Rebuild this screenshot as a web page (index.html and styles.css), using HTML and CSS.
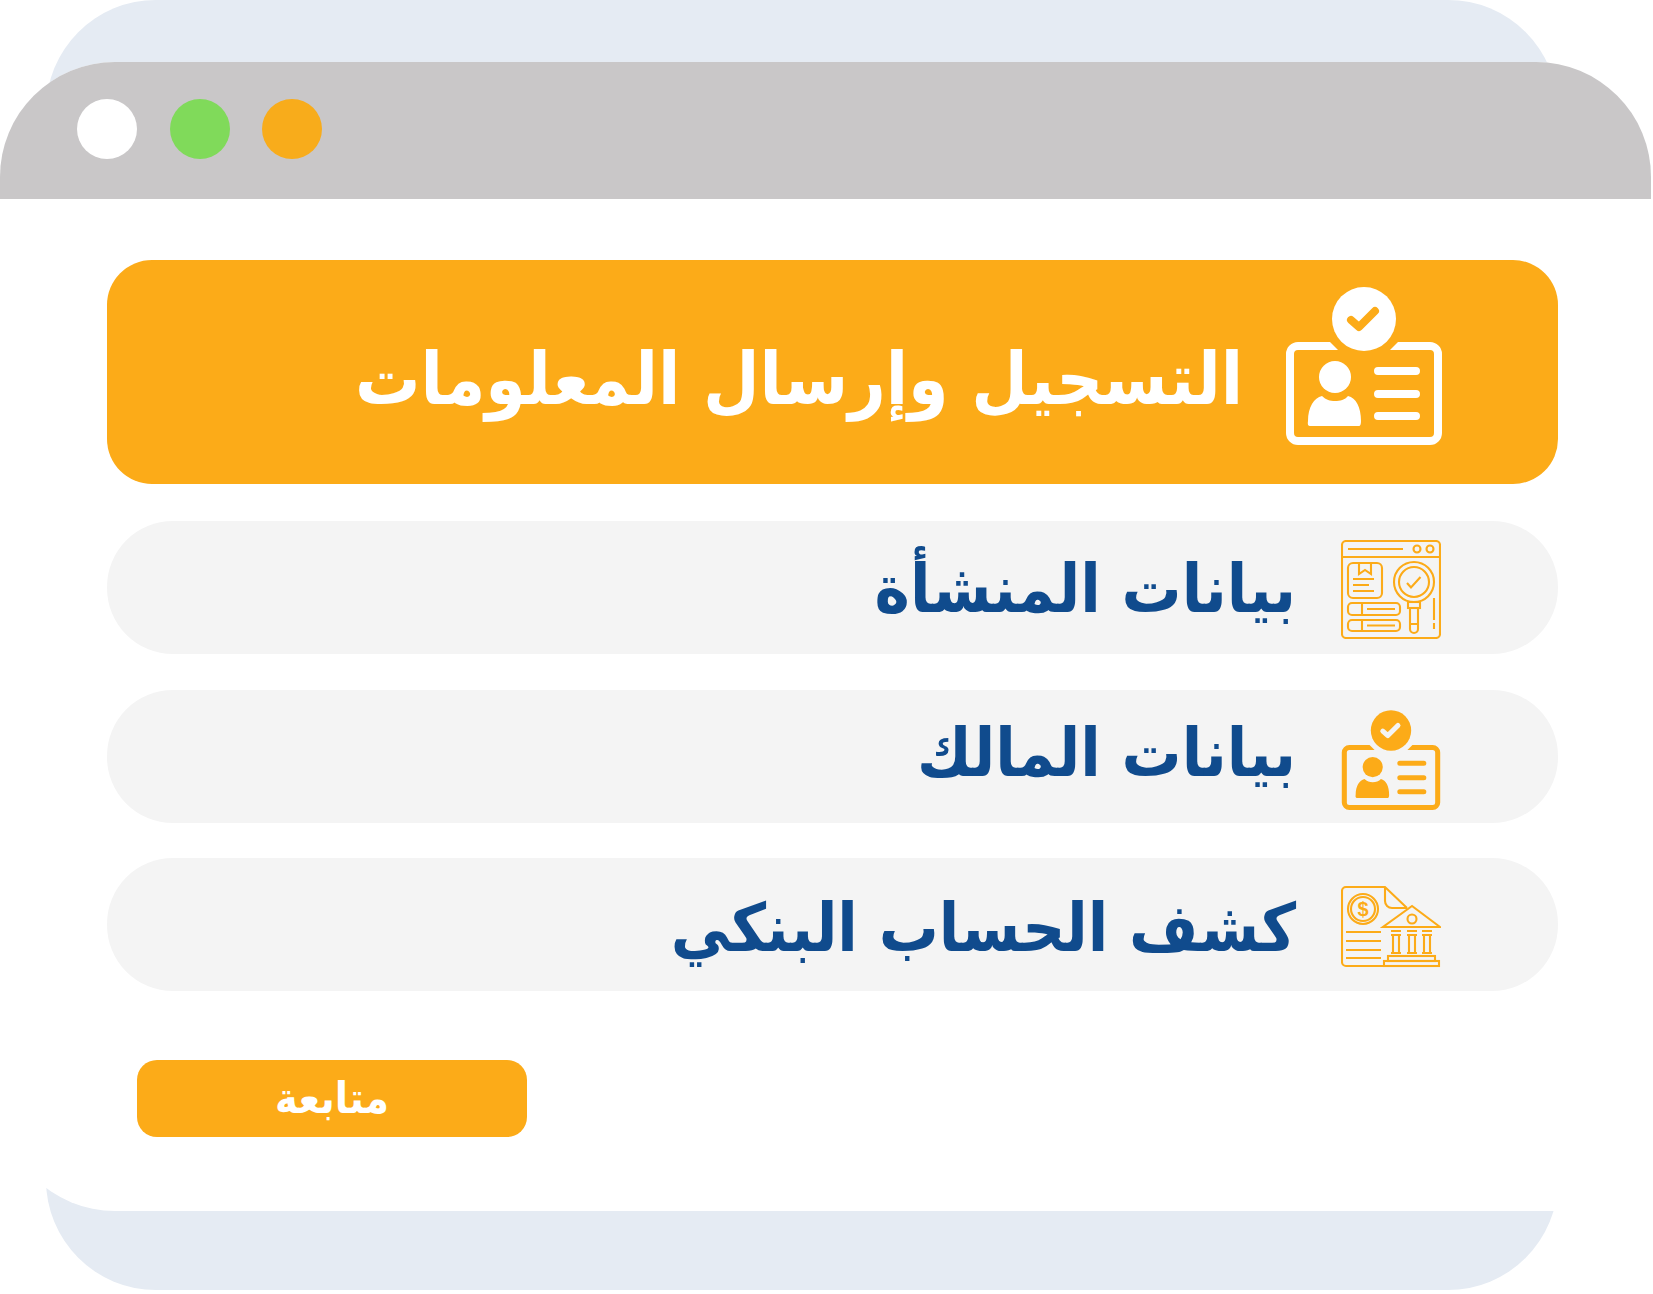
FILE: index.html
```html
<!DOCTYPE html>
<html lang="ar" dir="rtl">
<head>
    <meta charset="UTF-8">
    <title>التسجيل وإرسال المعلومات</title>
    <link rel="stylesheet" href="styles.css">
</head>
<body>
    <svg class="defs" width="0" height="0">
        <symbol id="id-check" viewBox="26 7 156 168">
            <path fill="currentColor" d="M70 72H38a12 12 0 0 0-12 12V163a12 12 0 0 0 12 12H170a12 12 0 0 0 12-12V84a12 12 0 0 0-12-12H138L130 80H170a4 4 0 0 1 4 4V163a4 4 0 0 1-4 4H38a4 4 0 0 1-4-4V84a4 4 0 0 1 4-4H78Z"/>
            <circle fill="currentColor" cx="104" cy="49" r="32"/>
            <path class="tick" d="M91 50L99 57L115 41"/>
            <circle fill="currentColor" cx="75" cy="107" r="16"/>
            <path fill="currentColor" d="M50 156Q47 156 48 151C48 137 54 128 62 126C66 130 70 131 75 131C80 131 85 130 88 126C96 128 101 137 101 151Q101 156 99 156Z"/>
            <path class="bars" d="M118 101H156M118 124H156M118 146H156"/>
        </symbol>
    </svg>

    <div class="stage">
        <div class="back-panel"></div>
        <div class="window">
            <div class="titlebar">
                <span class="dot dot-white"></span>
                <span class="dot dot-green"></span>
                <span class="dot dot-orange"></span>
            </div>
            <div class="content">
                <div class="step step-active">
                    <svg class="icon-big"><use href="#id-check"/></svg>
                    <span class="step-title">التسجيل وإرسال المعلومات</span>
                </div>
                <div class="step">
                    <svg class="icon line-icon" viewBox="21 10 100 99">
                        <rect x="22" y="11" width="98" height="97" rx="4"/>
                        <path d="M22 27H120M28 19H83"/>
                        <circle cx="97" cy="19" r="3.5"/>
                        <circle cx="110" cy="19" r="3.5"/>
                        <rect x="28" y="33" width="34" height="35" rx="5"/>
                        <path d="M39 34V44L45 40L51 44V34M33 49H54M33 55H49M33 61H54"/>
                        <rect x="28" y="73" width="52" height="12" rx="4"/>
                        <path d="M42 73V85M47 79H75"/>
                        <rect x="28" y="90" width="52" height="11" rx="4"/>
                        <path d="M42 90V101M47 95.500H75"/>
                        <circle cx="94" cy="52" r="20"/>
                        <circle cx="94" cy="52" r="15"/>
                        <path d="M87 53L91 57.500L100.500 47"/>
                        <rect x="88" y="72" width="12" height="6"/>
                        <path d="M90 78V99a4 4 0 0 0 8 0V78M90 94H98M114 68V90M114 93V99"/>
                    </svg>
                    <span class="step-title title-low">بيانات المنشأة</span>
                </div>
                <div class="step">
                    <svg class="icon icon-id"><use href="#id-check"/></svg>
                    <span class="step-title title-raised">بيانات المالك</span>
                </div>
                <div class="step step-last">
                    <svg class="icon line-icon" viewBox="21 11 100 81">
                        <path d="M87 33L65 12H26a4 4 0 0 0-4 4V87a4 4 0 0 0 4 4H63M65 13V26a7 7 0 0 0 7 7H87"/>
                        <circle cx="43" cy="34" r="15"/>
                        <circle cx="43" cy="34" r="12"/>
                        <text class="dollar" x="43" y="41">$</text>
                        <path d="M26 57H61M26 66H61M26 75H61M26 83H61"/>
                        <path d="M92 31L63 52H120Z"/>
                        <circle cx="92" cy="44" r="4.500"/>
                        <path d="M71 56H81M87 56H97M102 56H112M71 60H81M87 60H97M102 60H112"/>
                        <path d="M73 60V78M79 60V78M89 60V78M95 60V78M104 60V78M110 60V78"/>
                        <path d="M71 78H81M87 78H97M102 78H112"/>
                        <rect x="68" y="81" width="47" height="5"/>
                        <rect x="64" y="86" width="55" height="5"/>
                    </svg>
                    <span class="step-title title-lower">كشف الحساب البنكي</span>
                </div>
                <button class="next-btn" type="button">متابعة</button>
            </div>
        </div>
    </div>
</body>
</html>
```

FILE: styles.css
```css
html, body {
    margin: 0;
    padding: 0;
    background: #ffffff;
}
body {
    font-family: "DejaVu Sans", sans-serif;
    overflow: hidden;
}
.defs {
    display: block;
}
.stage {
    display: grid;
    width: 1653px;
    height: 1294px;
}
.back-panel, .window {
    grid-area: 1 / 1;
}
.back-panel {
    margin: 0 95px 4px 46px;
    background: #e5ebf3;
    border-radius: 110px;
}
.window {
    margin: 62px 2px 83px 0;
    background: #ffffff;
    border-radius: 115px 115px 0 115px;
}
.titlebar {
    display: flex;
    direction: ltr;
    gap: 32.500px;
    align-items: center;
    height: 134px;
    padding: 0 0 3px 77px;
    background: #c9c7c8;
    border-radius: 115px 115px 0 0;
}
.dot {
    width: 60px;
    height: 60px;
    border-radius: 50%;
}
.dot-white { background: #ffffff; }
.dot-green { background: #80da5a; }
.dot-orange { background: #f8ac1b; }

.content {
    display: flex;
    flex-direction: column;
    gap: 36px;
    padding: 61px 93px 0 107px;
}
.step {
    display: flex;
    align-items: center;
    gap: 45px;
    height: 133px;
    padding-right: 117px;
    background: #f4f4f4;
    border-radius: 66px;
    color: #fcab18;
    --tick: #f4f4f4;
}
.step-active {
    height: 224px;
    gap: 43px;
    padding-right: 116px;
    margin-bottom: 1px;
    background: #fcab18;
    border-radius: 45px;
    color: #ffffff;
    --tick: #fcab18;
}
.step-last {
    margin-top: -1px;
}
.step-title {
    font-family: "DejaVu Sans Condensed", "DejaVu Sans", sans-serif;
    font-stretch: condensed;
    font-size: 66.500px;
    font-weight: 700;
    color: #104b8d;
    white-space: nowrap;
}
.title-raised {
    padding-bottom: 8px;
}
.title-low {
    padding-top: 3px;
}
.title-lower {
    padding-top: 6px;
}
.step-active .step-title {
    font-size: 72.500px;
    padding-top: 14px;
    color: #ffffff;
}
.icon {
    width: 100px;
    height: 99px;
    flex: none;
}
.line-icon {
    margin-top: 3px;
    fill: none;
    stroke: currentColor;
    stroke-width: 2.100;
}
.icon-big {
    width: 156px;
    height: 168px;
    margin-bottom: 22px;
    flex: none;
}
.icon-id {
    height: 106px;
}
.tick {
    fill: none;
    stroke: var(--tick);
    stroke-width: 8;
    stroke-linecap: round;
    stroke-linejoin: round;
}
.bars {
    fill: none;
    stroke: currentColor;
    stroke-width: 8;
    stroke-linecap: round;
}
.dollar {
    font-family: "Liberation Sans", sans-serif;
    font-size: 20px;
    font-weight: 700;
    text-anchor: middle;
    fill: currentColor;
    stroke: none;
}
.next-btn {
    align-self: flex-end;
    width: 390px;
    height: 77px;
    margin: 33px 0 0 30px;
    padding: 0 0 2px;
    background: #fcab18;
    border: none;
    border-radius: 20px;
    color: #ffffff;
    font-family: "DejaVu Sans Condensed", "DejaVu Sans", sans-serif;
    font-stretch: condensed;
    font-size: 43px;
    font-weight: 700;
}
```
